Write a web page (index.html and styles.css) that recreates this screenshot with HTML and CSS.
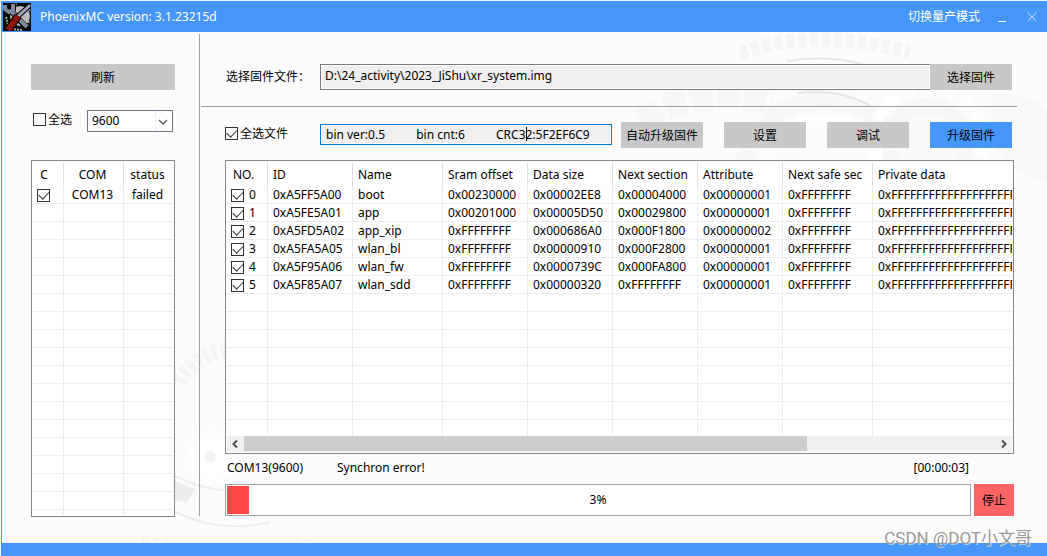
FILE: index.html
```html
<!DOCTYPE html>
<html lang="zh-CN">
<head>
<meta charset="utf-8">
<title>PhoenixMC</title>
<link rel="stylesheet" href="styles.css">
</head>
<body>
<div class="window">
  <header class="titlebar">
    <svg class="logo" viewBox="0 0 28 28" aria-hidden="true">
      <rect width="28" height="28" fill="#0a0a0c"/>
      <circle cx="17" cy="13" r="10" fill="#bdbdbd"/>
      <path d="M3 14l2 8M25 3l2 6M8 26l12 1M26 18l-3 7M9 3l5-2" stroke="#a8a8a8" stroke-width="2" stroke-dasharray="2 1"/>
      <path d="M4 2v4l3 2 3-2V1M7 7l18 19" stroke="#000" stroke-width="6" fill="none"/>
      <path d="M2 2v4l4 3 4-2V1M7 7l17 17" stroke="#7c8a9c" stroke-width="4" fill="none"/>
      <path d="M27 2l-5 5-8 7" stroke="#000" stroke-width="5" fill="none"/>
      <path d="M27 2l-5 5-8 7" stroke="#9aa4b0" stroke-width="3" fill="none"/>
      <path d="M15 13L5 27" stroke="#000" stroke-width="8"/>
      <path d="M15 13L5 27" stroke="#8c1408" stroke-width="6"/>
    </svg>
    <h1 class="title">PhoenixMC version: 3.1.23215d</h1>
    <button class="title-btn mode" type="button">切换量产模式</button>
    <button class="title-btn minimize" type="button" aria-label="Minimize"><svg width="8" height="12" viewBox="0 0 8 12"><path d="M0 10.500h8" stroke="#fff"/></svg></button>
    <button class="title-btn close" type="button" aria-label="Close"><svg width="10" height="10" viewBox="0 0 10 10"><path d="M.5.5l9 9M9.500.5l-9 9" stroke="#bcd8fb"/></svg></button>
  </header>

  <main class="content">
    <svg class="gears" viewBox="0 0 1045 511" preserveAspectRatio="none" aria-hidden="true">
      <g fill="none" stroke="#f7f7f7">
        <path d="M738 22q70-28 170-2" stroke="#f5f5f5" stroke-width="14" stroke-dasharray="8 4"/>
        <path d="M640 90q60-40 130-20" stroke-width="26" stroke-dasharray="22 5"/>
        <circle cx="822" cy="150" r="82" stroke-width="18"/>
        <circle cx="822" cy="150" r="62" stroke="#fff" stroke-width="12"/>
        <circle cx="925" cy="112" r="38" stroke-width="16" fill="#fafafa"/>
        <circle cx="925" cy="112" r="56" stroke="#fff" stroke-width="12" stroke-dasharray="12 8"/>
        <path d="M990 60q40 0 55 20v70q-40-10-55-40z" fill="#f8f8f8" stroke="none"/>
        <path d="M0 145" />
        <path d="M176 350q20-30 50-32" stroke="#f5f5f5" stroke-width="16" stroke-dasharray="6 3"/>
        <path d="M140 508q80 24 170 4" stroke="#f5f5f5" stroke-width="12" stroke-dasharray="7 4"/>
        <circle cx="208" cy="425" r="14" stroke="#fff" stroke-width="18"/>
        <circle cx="208" cy="425" r="24" stroke="#fff" stroke-width="8" stroke-dasharray="7 5"/>
        <circle cx="208" cy="425" r="6" fill="#f3f3f3" stroke="none"/>
        <path d="M173 449l20 8-8 14-12-2z" fill="#ededed" stroke="none"/>
        <path d="M173 480q45 22 95 10M173 444q28 14 52 14" stroke="#ededed" stroke-width="2"/>
        <path d="M785 29q40-6 75 3M795 61q40-6 75 14" stroke="#e6e6e6" stroke-width="2"/>
      </g>
    </svg>

    <section class="ports">
      <button class="btn refresh" type="button">刷新</button>
      <div class="port-options">
        <label class="check"><input type="checkbox">全选</label>
        <span class="baud">
          <select aria-label="Baud rate"><option>9600</option></select>
          <svg width="17" height="20" viewBox="0 0 17 20" aria-hidden="true"><path d="M.5 0v20" stroke="#e3f0fa"/><path d="M4 9l4 4 4-4" fill="none" stroke="#555" stroke-width="1.300"/></svg>
        </span>
      </div>
      <div class="list">
        <div class="rows">
          <table class="grid port-grid">
            <colgroup><col class="c-check"><col class="c-com"><col></colgroup>
            <thead><tr><th>C</th><th>COM</th><th>status</th></tr></thead>
            <tbody>
              <tr><td><input type="checkbox" checked aria-label="COM13"></td><td>COM13</td><td>failed</td></tr>
              <tr class="fill"><td></td><td></td><td></td></tr>
            </tbody>
          </table>
        </div>
      </div>
    </section>

    <div class="divider"></div>

    <section class="firmware">
      <div class="file-row">
        <label class="caption" for="path">选择固件文件：</label>
        <input class="path" id="path" type="text" readonly value="D:\24_activity\2023_JiShu\xr_system.img">
        <button class="btn" type="button">选择固件</button>
      </div>
      <hr class="rule">
      <div class="action-row">
        <label class="check all-files"><input type="checkbox" checked>全选文件</label>
        <span class="info">
          <input type="text" aria-label="Firmware info" readonly value="bin ver:0.5          bin cnt:6          CRC32:5F2EF6C9">
        </span>
        <div class="actions">
          <button class="btn" type="button">自动升级固件</button>
          <button class="btn" type="button">设置</button>
          <button class="btn" type="button">调试</button>
          <button class="btn primary" type="button">升级固件</button>
        </div>
      </div>

      <div class="list">
        <div class="rows">
          <table class="grid">
            <colgroup><col class="c-no"><col class="c-mid"><col class="c-wide"><col class="c-mid"><col class="c-mid"><col class="c-mid"><col class="c-mid"><col class="c-wide"><col></colgroup>
            <thead><tr><th class="no">NO.</th><th>ID</th><th>Name</th><th>Sram offset</th><th>Data size</th><th>Next section</th><th>Attribute</th><th>Next safe sec</th><th>Private data</th></tr></thead>
            <tbody>
              <tr><td><label class="num"><input type="checkbox" checked>0</label></td><td>0xA5FF5A00</td><td>boot</td><td>0x00230000</td><td>0x00002EE8</td><td>0x00004000</td><td>0x00000001</td><td>0xFFFFFFFF</td><td>0xFFFFFFFFFFFFFFFFFFFFFFFF</td></tr>
              <tr><td><label class="num"><input type="checkbox" checked>1</label></td><td>0xA5FE5A01</td><td>app</td><td>0x00201000</td><td>0x00005D50</td><td>0x00029800</td><td>0x00000001</td><td>0xFFFFFFFF</td><td>0xFFFFFFFFFFFFFFFFFFFFFFFF</td></tr>
              <tr><td><label class="num"><input type="checkbox" checked>2</label></td><td>0xA5FD5A02</td><td>app_xip</td><td>0xFFFFFFFF</td><td>0x000686A0</td><td>0x000F1800</td><td>0x00000002</td><td>0xFFFFFFFF</td><td>0xFFFFFFFFFFFFFFFFFFFFFFFF</td></tr>
              <tr><td><label class="num"><input type="checkbox" checked>3</label></td><td>0xA5FA5A05</td><td>wlan_bl</td><td>0xFFFFFFFF</td><td>0x00000910</td><td>0x000F2800</td><td>0x00000001</td><td>0xFFFFFFFF</td><td>0xFFFFFFFFFFFFFFFFFFFFFFFF</td></tr>
              <tr><td><label class="num"><input type="checkbox" checked>4</label></td><td>0xA5F95A06</td><td>wlan_fw</td><td>0xFFFFFFFF</td><td>0x0000739C</td><td>0x000FA800</td><td>0x00000001</td><td>0xFFFFFFFF</td><td>0xFFFFFFFFFFFFFFFFFFFFFFFF</td></tr>
              <tr><td><label class="num"><input type="checkbox" checked>5</label></td><td>0xA5F85A07</td><td>wlan_sdd</td><td>0xFFFFFFFF</td><td>0x00000320</td><td>0xFFFFFFFF</td><td>0x00000001</td><td>0xFFFFFFFF</td><td>0xFFFFFFFFFFFFFFFFFFFFFFFF</td></tr>
              <tr class="fill"><td></td><td></td><td></td><td></td><td></td><td></td><td></td><td></td><td></td></tr>
            </tbody>
          </table>
        </div>
        <div class="scrollbar" aria-hidden="true">
          <svg width="17" height="16" viewBox="0 0 17 16"><path d="M10 4.500L6.500 8l3.500 3.500" fill="none" stroke="#505050" stroke-width="2"/></svg>
          <div class="track"><div class="thumb"></div></div>
          <svg width="17" height="16" viewBox="0 0 17 16"><path d="M7 4.500L10.500 8 7 11.500" fill="none" stroke="#505050" stroke-width="2"/></svg>
        </div>
      </div>

      <div class="status">
        <span class="port-name">COM13(9600)</span>
        <span class="message">Synchron error!</span>
        <span class="timer">[00:00:03]</span>
      </div>
      <div class="progress-row">
        <div class="progress" role="progressbar" aria-valuenow="3" aria-label="Progress">
          <div class="bar" style="width: 3%"></div>
          <span class="percent">3%</span>
        </div>
        <button class="btn stop" type="button">停止</button>
      </div>
    </section>
  </main>
  <footer class="bottom"></footer>
  <div class="watermark">CSDN @DOT小文哥</div>
</div>
</body>
</html>
```
FILE: styles.css
```css
* {
  box-sizing: border-box;
}

body {
  margin: 0;
  background: #f3f3ec;
  color: #000;
  font: 12px/16px "Noto Sans", "Noto Sans CJK SC", sans-serif;
}

button,
input,
select {
  margin: 0;
  border: 0;
  border-radius: 0;
  padding: 0;
  color: inherit;
  font: inherit;
}

.window {
  position: relative;
  display: flex;
  flex-direction: column;
  min-height: 100vh;
  padding-top: 1px;
}

.titlebar {
  display: flex;
  align-items: center;
  height: 31px;
  margin-left: 1px;
  padding: 0 10px 0 2px;
  background: #4696f9;
  color: #fff;
}

.logo {
  width: 28px;
  height: 28px;
}

.title {
  flex: 1;
  margin: 0 0 0 9px;
  padding-top: 1px;
  font-size: 12px;
  font-weight: 400;
}

.title-btn {
  display: flex;
  align-items: center;
  background: none;
}

.minimize {
  margin-left: 18px;
}

.close {
  margin-left: 21px;
}

.content {
  position: relative;
  z-index: 0;
  display: flex;
  flex: 1;
  margin-left: 1px;
  border-left: 1px solid #4696f9;
  background: #fcfcfc;
}

.gears {
  position: absolute;
  inset: 0;
  z-index: -1;
  width: 100%;
  height: 100%;
}

.bottom {
  height: 13px;
  margin-left: 1px;
  background: #4696f9;
}

.btn {
  width: 82px;
  height: 26px;
  padding-top: 2px;
  background: #c8c8c8;
  white-space: nowrap;
}

.primary {
  background: #4696f9;
}

input[type="checkbox"] {
  display: grid;
  flex: none;
  place-content: center;
  width: 13px;
  height: 13px;
  appearance: none;
  border: 1px solid #333;
  background: #fff;
}

input[type="checkbox"]:checked::after {
  content: "";
  width: 9px;
  height: 5px;
  margin-bottom: 3px;
  border: solid #333;
  border-width: 0 0 1px 1px;
  transform: rotate(-45deg);
}

.check {
  display: flex;
  align-items: center;
  gap: 2px;
  padding-bottom: 3px;
}

.ports {
  display: flex;
  flex-direction: column;
  width: 197px;
  padding: 32px 24px 26px 29px;
}

.refresh {
  width: 100%;
}

.port-options {
  display: flex;
  justify-content: space-between;
  height: 22px;
  margin: 20px 0 28px;
  padding: 0 2px;
}

.baud {
  position: relative;
  width: 86px;
}

.baud select {
  width: 100%;
  height: 22px;
  padding-left: 4px;
  appearance: none;
  border: 1px solid #6c7684;
  background: #fff;
}

.baud svg {
  position: absolute;
  top: 1px;
  right: 1px;
  pointer-events: none;
}

.divider {
  width: 1px;
  margin: 2px 0 27px;
  background: #a0a0a0;
}

.firmware {
  display: flex;
  flex: 1;
  flex-direction: column;
  min-width: 0;
  padding: 32px 33px 27px 25px;
}

.file-row,
.action-row {
  display: flex;
  align-items: center;
  padding-right: 2px;
}

.caption,
.all-files {
  flex: none;
  width: 95px;
}

.caption {
  padding-left: 1px;
}

.path {
  flex: 1;
  height: 26px;
  min-width: 0;
  padding: 0 4px 4px;
  border: 1px solid #7a7a7a;
  border-right: 0;
  background: #efefef;
  box-shadow: inset 0 0 0 1px #fff;
}

.rule {
  height: 1px;
  margin: 16px -3px 15px -24px;
  border: 0;
  background: #a0a0a0;
}

.info {
  position: relative;
  flex: 1;
  margin: 0 9px 2px 0;
}

.info input {
  display: block;
  width: 100%;
  height: 21px;
  padding: 0 5px;
  border: 1px solid #0078d7;
  background: #efefef;
  box-shadow: inset 0 0 0 1px #fff;
}

/* text caret */
.info::after {
  content: "";
  position: absolute;
  top: 3px;
  left: 206px;
  width: 1px;
  height: 14px;
  background: #000;
}

.actions {
  display: flex;
  gap: 21px;
}

.list {
  display: flex;
  flex: 1;
  flex-direction: column;
  padding: 1px;
  border: 1px solid #828790;
  background: #fff;
}

.firmware .list {
  margin-top: 12px;
}

.rows {
  display: flex;
  flex: 1;
  overflow: hidden;
}

.grid {
  width: 100%;
  border-spacing: 0;
  table-layout: fixed;
}

.grid th,
.grid td {
  height: 18px;
  padding: 1px 0 0 5px;
  overflow: hidden;
  border-right: 1px solid #ededed;
  border-bottom: 1px solid #ededed;
  font-weight: 400;
  line-height: 16px;
  text-align: left;
  white-space: nowrap;
}

.grid th {
  height: 24px;
  border-right-color: #e0e0e0;
  border-bottom: 0;
}

.grid td:last-child,
.grid th:last-child {
  border-right: 0;
}

.grid .fill td {
  height: auto;
  border-bottom: 0;
  background: repeating-linear-gradient(transparent 0 17px, #ededed 17px 18px);
}

.grid td:first-child {
  padding-left: 4px;
}

.grid .no {
  padding-left: 6px;
}

.port-grid th,
.port-grid td {
  padding-right: 2px;
  padding-left: 0;
  text-align: center;
}

.port-grid th:first-child {
  padding-right: 8px;
}

.c-check {
  width: 31px;
}

.c-com {
  width: 60px;
}

.c-no {
  width: 41px;
}

.c-mid {
  width: 85px;
}

.c-wide {
  width: 90px;
}

.num {
  display: flex;
  align-items: center;
  gap: 5px;
}

.scrollbar {
  display: flex;
  height: 16px;
  background: #f0f0f0;
}

.track {
  flex: 1;
}

.thumb {
  width: 75%;
  height: 15px;
  background: #cdcdcd;
}

.status {
  display: flex;
  align-items: center;
  height: 30px;
  padding: 0 45px 2px 2px;
}

.port-name {
  width: 110px;
}

.timer {
  margin-left: auto;
}

.progress-row {
  display: flex;
  gap: 3px;
}

.progress {
  display: grid;
  flex: 1;
  align-items: center;
  height: 32px;
  padding: 1px;
  border: 1px solid #a0a0a0;
  background: #fff;
}

.bar,
.percent {
  grid-area: 1 / 1;
}

.bar {
  height: 28px;
  background: #ff4646;
}

.percent {
  text-align: center;
}

.stop {
  width: 40px;
  height: 32px;
  background: #ff6464;
}

.watermark {
  position: absolute;
  right: 15px;
  bottom: 6px;
  color: #999;
  font: 17px/24px Roboto, "Noto Sans CJK SC", sans-serif;
  text-shadow: 1px 1px 0 #fff8;
}
```
